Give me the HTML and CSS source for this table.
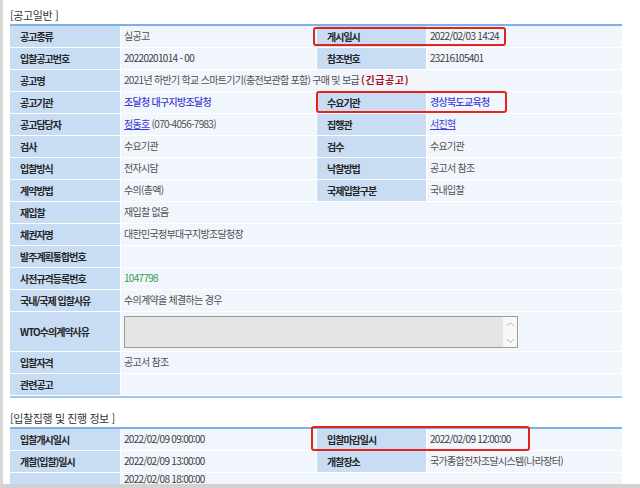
FILE: index.html
```html
<!DOCTYPE html>
<html lang="ko">
<head>
<meta charset="utf-8">
<title>공고일반</title>
<link rel="stylesheet" href="styles.css">
</head>
<body>
<div class="window">
  <div class="content">
    <h2 class="section-title">[공고일반 ]</h2>
    <div class="table-wrap">
      <div class="grid">
        <div class="th">공고종류</div><div class="td">실공고</div><div class="th">게시일시</div><div class="td num">2022/02/03 14:24</div>
        <div class="th">입찰공고번호</div><div class="td num">20220201014 - 00</div><div class="th">참조번호</div><div class="td num">23216105401</div>
        <div class="th">공고명</div><div class="td span3">2021년 하반기 학교 스마트기기(충전보관함 포함) 구매 및 보급&nbsp;<span class="urgent">(긴급공고)</span></div>
        <div class="th">공고기관</div><div class="td"><span class="org">조달청 대구지방조달청</span></div><div class="th">수요기관</div><div class="td"><span class="org">경상북도교육청</span></div>
        <div class="th">공고담당자</div><div class="td"><span class="person">정동호</span>&nbsp;(070-4056-7983)</div><div class="th">집행관</div><div class="td"><span class="person">서진혁</span></div>
        <div class="th">검사</div><div class="td">수요기관</div><div class="th">검수</div><div class="td">수요기관</div>
        <div class="th">입찰방식</div><div class="td">전자시담</div><div class="th">낙찰방법</div><div class="td">공고서 참조</div>
        <div class="th">계약방법</div><div class="td">수의(총액)</div><div class="th">국제입찰구분</div><div class="td">국내입찰</div>
        <div class="th">재입찰</div><div class="td span3">재입찰 없음</div>
        <div class="th">채권자명</div><div class="td span3">대한민국정부대구지방조달청장</div>
        <div class="th">발주계획통합번호</div><div class="td span3"></div>
        <div class="th">사전규격등록번호</div><div class="td span3"><span class="reg-no">1047798</span></div>
        <div class="th">국내/국제 입찰사유</div><div class="td span3">수의계약을 체결하는 경우</div>
        <div class="th tall">WTO수의계약사유</div>
        <div class="td span3 tall">
          <div class="memo">
            <div class="memo-body"></div>
            <div class="memo-scroll">
              <svg width="9" height="6" viewBox="0 0 9 6"><path d="M1 5 L4.5 1.5 L8 5" fill="none" stroke="#b4b4b4" stroke-width="1"/></svg>
              <svg width="9" height="6" viewBox="0 0 9 6"><path d="M1 1 L4.5 4.5 L8 1" fill="none" stroke="#b4b4b4" stroke-width="1"/></svg>
            </div>
          </div>
        </div>
        <div class="th">입찰자격</div><div class="td span3">공고서 참조</div>
        <div class="th">관련공고</div><div class="td span3"></div>
      </div>
      <div class="mark mark-post"></div>
      <div class="mark mark-demand"></div>
    </div>

    <h2 class="section-title second">[입찰집행 및 진행 정보 ]</h2>
    <div class="table-wrap">
      <div class="grid open-end">
        <div class="th">입찰개시일시</div><div class="td num">2022/02/09 09:00:00</div><div class="th">입찰마감일시</div><div class="td num">2022/02/09 12:00:00</div>
        <div class="th">개찰(입찰)일시</div><div class="td num">2022/02/09 13:00:00</div><div class="th">개찰장소</div><div class="td">국가종합전자조달시스템(나라장터)</div>
        <div class="th"></div><div class="td span3 num top">2022/02/08 18:00:00</div>
      </div>
      <div class="mark mark-close"></div>
    </div>
  </div>
  <div class="bottom-bar"></div>
</div>
</body>
</html>
```

FILE: styles.css
```css
* { box-sizing: border-box; }

html, body {
  margin: 0;
  padding: 0;
  background: #ffffff;
}

body {
  font-family: "Noto Sans CJK KR", "Noto Sans", sans-serif;
  color: #444;
}

.window {
  width: 640px;
  height: 488px;
  display: flex;
  flex-direction: column;
  overflow: hidden;
}

.content {
  flex: 1;
  min-height: 0;
  overflow: hidden;
  border-left: 3px solid #d8d8d8;
  padding: 7px 0 0 7px;
}

.bottom-bar {
  height: 4px;
  background: #d2d2d2;
  flex: none;
}

.section-title {
  margin: 0;
  height: 17px;
  line-height: 17px;
  font-size: 11px;
  font-weight: normal;
  color: #333333;
  letter-spacing: -0.4px;
}

.section-title.second {
  margin-top: 12px;
}

.table-wrap {
  position: relative;
  width: 612px;
}

.grid {
  display: grid;
  grid-template-columns: 110px 195px 109px 195px;
  grid-auto-rows: minmax(21px, auto);
  gap: 1px;
  background: #ffffff;
  border-top: 2px solid #7db0e8;
  border-bottom: 2px solid #a3c6ee;
  padding-bottom: 1px;
  width: 612px;
  box-sizing: content-box;
}

.grid.open-end {
  border-bottom: none;
}

.th {
  background: #c8dcf4;
  color: #262626;
  font-weight: bold;
  font-size: 10px;
  letter-spacing: -1px;
  padding-left: 10px;
  display: flex;
  align-items: center;
  white-space: nowrap;
  overflow: hidden;
}

.td {
  background: #f1f5fc;
  color: #505050;
  font-size: 10px;
  letter-spacing: -0.7px;
  padding: 0 0 2px 3px;
  display: flex;
  align-items: center;
  white-space: nowrap;
  overflow: hidden;
}

.td.num {
  color: #3c3c3c;
}

.td.top {
  align-items: flex-start;
  padding-top: 0;
  line-height: 11px;
}

.span3 {
  grid-column: span 3;
}

.tall {
  height: 39px;
}

.urgent {
  color: #a3151b;
  font-weight: bold;
  letter-spacing: 0.6px;
}

.org {
  color: #3b3bd6;
  font-weight: 500;
}

.person {
  color: #3b3bd6;
  text-decoration: underline;
}

.reg-no {
  color: #2f9e4f;
}

.memo {
  width: 394px;
  height: 32px;
  margin-top: 2px;
  border: 1px solid #9c9c9c;
  background: #e5e5e5;
  display: flex;
}

.memo-body {
  flex: 1;
}

.memo-scroll {
  width: 14px;
  background: #f7f7f7;
  display: flex;
  flex-direction: column;
  align-items: center;
  justify-content: space-between;
  padding: 4px 0 3px;
}

.memo-scroll svg {
  display: block;
}

.mark {
  position: absolute;
  border: 2px solid #e4231c;
  border-radius: 3px;
  pointer-events: none;
}

.mark-post {
  left: 303px;
  top: 3px;
  width: 193px;
  height: 19px;
}

.mark-demand {
  left: 306px;
  top: 67px;
  width: 191px;
  height: 22px;
}

.mark-close {
  left: 301px;
  top: -1px;
  width: 219px;
  height: 25px;
}
```
